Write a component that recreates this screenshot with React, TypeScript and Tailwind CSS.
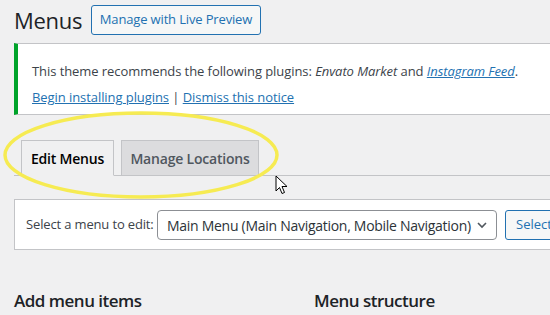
import type { FC } from "react";

const font = { fontFamily: '"Open Sans", "Noto Sans", sans-serif' };

const Cursor: FC = () => (
  <svg
    className="absolute left-[275px] top-[175px]"
    width="13"
    height="20"
    viewBox="0 0 13 20"
  >
    <path
      d="M1 1 L1 16 L4.5 12.5 L7 18.5 L9.5 17.5 L7 11.5 L12 11.5 Z"
      fill="#fff"
      stroke="#000"
      strokeWidth="1"
      strokeLinejoin="miter"
    />
  </svg>
);

const Highlight: FC = () => (
  <svg
    className="absolute left-[2px] top-[111px] pointer-events-none"
    width="278"
    height="90"
    viewBox="0 0 278 90"
  >
    <ellipse
      cx="139"
      cy="44"
      rx="136"
      ry="42"
      fill="none"
      stroke="#f6eb52"
      strokeWidth="3.5"
    />
  </svg>
);

export default function App() {
  return (
    <div
      className="relative w-[550px] h-[315px] overflow-hidden bg-[#f0f0f1] text-[#3c434a] whitespace-nowrap"
      style={font}
    >
      <div className="w-[820px] pl-[14px]">
        {/* heading */}
        <div className="flex items-center pt-[5px]">
          <h1 className="w-[77px] text-[22px] leading-[29px] font-normal tracking-[-0.3px] text-[#1d2327]">
            Menus
          </h1>
          <a className="flex items-center justify-center w-[170px] h-[30px] rounded-[3px] border border-[#2271b1] bg-[#f6f7f7] text-[13px] tracking-[-0.15px] text-[#2271b1]">
            Manage with Live Preview
          </a>
        </div>

        {/* notice */}
        <div className="mt-[8px] h-[72px] bg-white border border-[#c3c4c7] border-l-4 border-l-[#00a32a] pl-[14px] pt-[17px] text-[13px] tracking-[-0.07px]">
          <p className="leading-[20px]">
            This theme recommends the following plugins: <em>Envato Market</em>{" "}
            and{" "}
            <a className="italic underline text-[#2271b1]">Instagram Feed</a>.
          </p>
          <p className="mt-[6px] leading-[20px]">
            <a className="underline text-[#2271b1]">Begin installing plugins</a>{" "}
            | <a className="underline text-[#2271b1]">Dismiss this notice</a>
          </p>
        </div>

        {/* tabs */}
        <div className="mt-[25px] flex gap-[7px] pl-[7px] border-b border-[#c3c4c7]">
          <a className="-mb-px flex items-center justify-center w-[93px] h-[36px] border border-[#c3c4c7] border-b-[#f0f0f1] bg-[#f0f0f1] text-[14px] font-semibold tracking-[-0.2px] text-black">
            Edit Menus
          </a>
          <a className="flex items-center justify-center w-[138px] h-[35px] border border-b-0 border-[#c3c4c7] bg-[#dcdcde] text-[14px] font-semibold tracking-[-0.2px] text-[#50575e]">
            Manage Locations
          </a>
        </div>

        {/* select menu box */}
        <div className="mt-[23px] flex items-center h-[51px] bg-white border border-[#c3c4c7] pl-[11px] pt-px">
          <span className="w-[131px] shrink-0 text-[13px] tracking-[-0.15px]">
            Select a menu to edit:
          </span>
          <div className="flex items-center justify-between w-[340px] h-[30px] rounded-[4px] border border-[#8c8f94] bg-white pl-[9px] pr-[8px] text-[14px] tracking-[-0.28px] text-[#2c3338]">
            <span>Main Menu (Main Navigation, Mobile Navigation)</span>
            <svg width="12" height="12" viewBox="0 0 12 12">
              <path
                d="M2 4 L6 8 L10 4"
                fill="none"
                stroke="#50575e"
                strokeWidth="1.6"
              />
            </svg>
          </div>
          <a className="ml-[8px] flex items-center w-[70px] h-[30px] rounded-[3px] border border-[#2271b1] bg-[#f6f7f7] pl-[10px] text-[13px] text-[#2271b1]">
            Select
          </a>
        </div>

        {/* columns */}
        <div className="flex mt-[40px]">
          <h2 className="w-[300px] text-[17px] leading-[22px] font-semibold tracking-[-0.5px] text-[#1d2327]">
            Add menu items
          </h2>
          <h2 className="text-[17px] leading-[22px] font-semibold tracking-[-0.5px] text-[#1d2327]">
            Menu structure
          </h2>
        </div>
      </div>

      <Highlight />
      <Cursor />
    </div>
  );
}
